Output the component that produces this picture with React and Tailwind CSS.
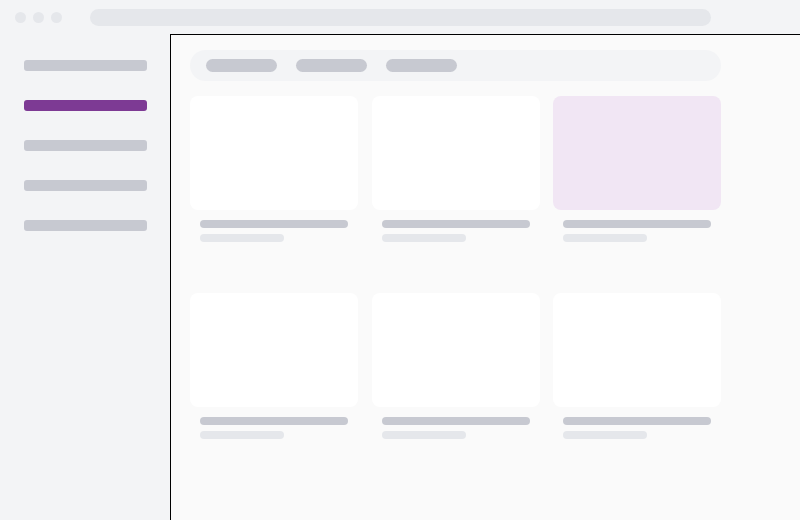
import React from "react";

const navItems = [false, true, false, false, false];
const tabs = [0, 1, 2];
const cards = [
  { tint: false },
  { tint: false },
  { tint: true },
  { tint: false },
  { tint: false },
  { tint: false },
];

const Card = ({ tint }) => {
  return (
    <div className="flex flex-col">
      <div
        className={`h-[114px] rounded-lg ${
          tint ? "bg-[#f1e6f4]" : "bg-white"
        }`}
      />
      <div className="mt-[10px] ml-[10px] h-2 w-[148px] rounded-sm bg-[#c7c9d1]" />
      <div className="mt-[6px] ml-[10px] h-2 w-[84px] rounded-sm bg-[#e5e7eb]" />
    </div>
  );
};

const App = () => {
  return (
    <div className="w-[800px] h-[520px] overflow-hidden bg-[#f3f4f6] flex flex-col">
      {/* Window chrome */}
      <div className="h-[34px] shrink-0 flex items-center pl-[15px]">
        <div className="flex gap-[7px]">
          <span className="w-[11px] h-[11px] rounded-full bg-[#e5e7eb]" />
          <span className="w-[11px] h-[11px] rounded-full bg-[#e5e7eb]" />
          <span className="w-[11px] h-[11px] rounded-full bg-[#e5e7eb]" />
        </div>
        <div className="ml-[28px] w-[621px] h-[17px] rounded-full bg-[#e5e7eb]" />
      </div>

      <div className="flex flex-1 min-h-0">
        {/* Sidebar */}
        <aside className="w-[170px] shrink-0 flex flex-col gap-[29px] pt-[26px] pl-[24px]">
          {navItems.map((active, i) => (
            <div
              key={i}
              className={`w-[123px] h-[11px] rounded-[3px] ${
                active ? "bg-[#7d3a94]" : "bg-[#c7c9d1]"
              }`}
            />
          ))}
        </aside>

        {/* Main panel */}
        <main className="flex-1 border-l border-t border-black bg-[#fafafa] pt-[15px] pl-[19px]">
          <div className="w-[531px] h-[31px] rounded-full bg-[#f3f4f6] flex items-center gap-[19px] pl-4">
            {tabs.map((t) => (
              <div key={t} className="w-[71px] h-[13px] rounded-full bg-[#c7c9d1]" />
            ))}
          </div>

          <div className="mt-[15px] w-[531px] grid grid-cols-3 gap-x-[13.5px] gap-y-[51px]">
            {cards.map((c, i) => (
              <Card key={i} {...c} />
            ))}
          </div>
        </main>
      </div>
    </div>
  );
};

export default App;
